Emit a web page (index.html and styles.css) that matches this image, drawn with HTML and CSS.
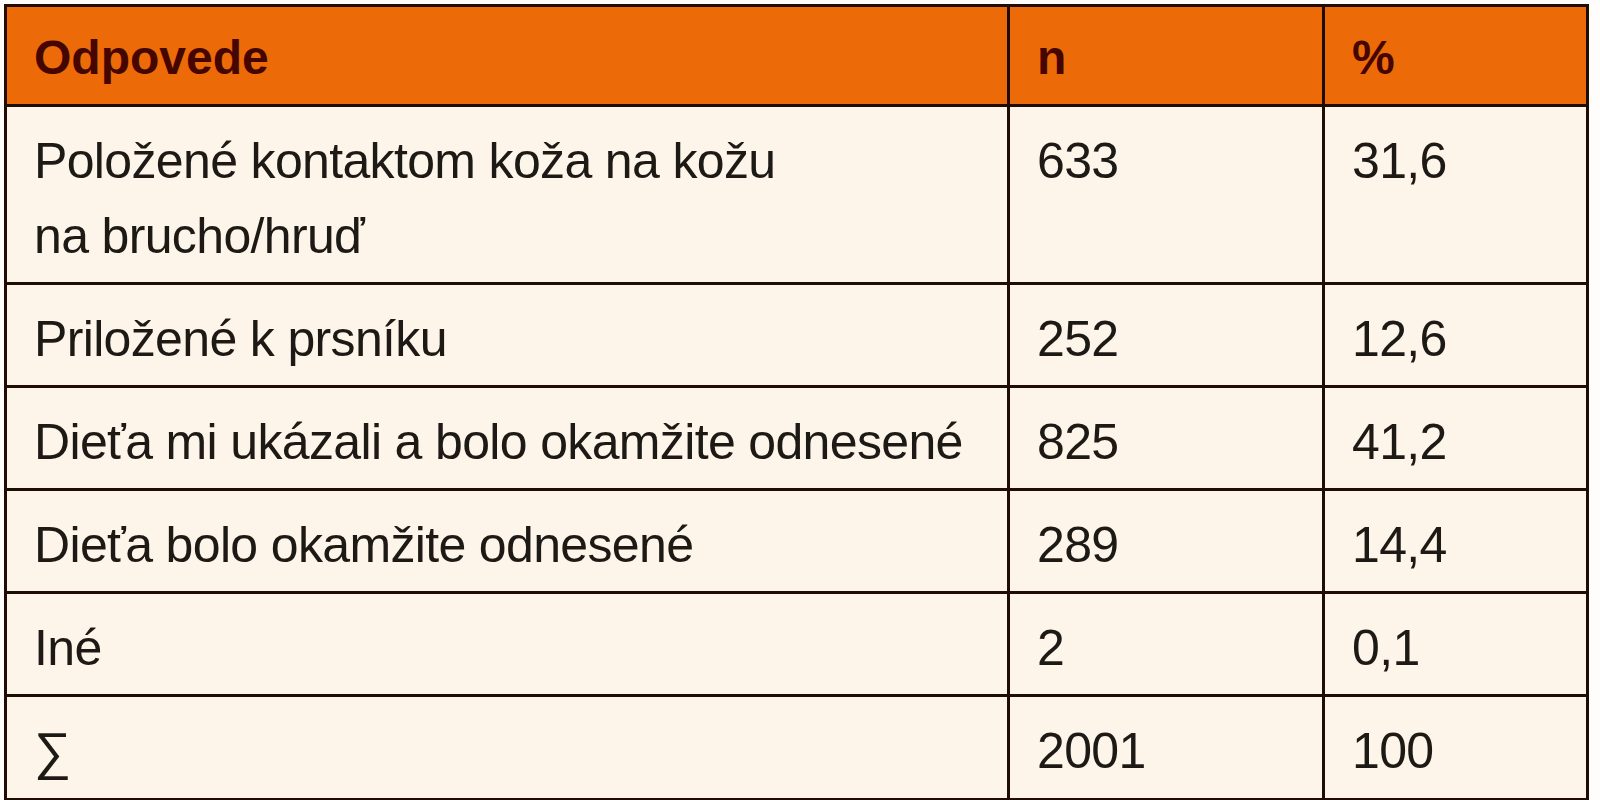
FILE: index.html
```html
<!DOCTYPE html>
<html lang="sk">
<head>
<meta charset="utf-8">
<title>Odpovede</title>
<link rel="stylesheet" href="styles.css">
</head>
<body>
<table class="data">
  <colgroup>
    <col class="c1">
    <col class="c2">
    <col class="c3">
  </colgroup>
  <thead>
    <tr class="head">
      <th>Odpovede</th>
      <th>n</th>
      <th>%</th>
    </tr>
  </thead>
  <tbody>
    <tr>
      <td>Položené kontaktom koža na kožu<br>na brucho/hruď</td>
      <td>633</td>
      <td>31,6</td>
    </tr>
    <tr>
      <td>Priložené k prsníku</td>
      <td>252</td>
      <td>12,6</td>
    </tr>
    <tr>
      <td>Dieťa mi ukázali a bolo okamžite odnesené</td>
      <td>825</td>
      <td>41,2</td>
    </tr>
    <tr>
      <td>Dieťa bolo okamžite odnesené</td>
      <td>289</td>
      <td>14,4</td>
    </tr>
    <tr>
      <td>Iné</td>
      <td>2</td>
      <td>0,1</td>
    </tr>
    <tr>
      <td><span class="sigma">∑</span></td>
      <td>2001</td>
      <td>100</td>
    </tr>
  </tbody>
</table>
</body>
</html>
```

FILE: styles.css
```css
html, body {
  margin: 0;
  padding: 0;
  background: #fffdfb;
}

body {
  padding: 4px 0 0 4px;
  font-family: "Liberation Sans", Arial, sans-serif;
}

.data {
  border-collapse: separate;
  border-spacing: 0;
  table-layout: fixed;
  width: 1585px;
  border-top: 3px solid #1f0d04;
  border-left: 3px solid #1f0d04;
  background: #fdf4ea;
}

.c1 { width: 1003px; }
.c2 { width: 315px; }
.c3 { width: 264px; }

.data th,
.data td {
  box-sizing: border-box;
  border-right: 3px solid #1f0d04;
  border-bottom: 3px solid #1f0d04;
  text-align: left;
  vertical-align: top;
  padding: 17px 10px 8px 27px;
}

.data th {
  background: #ec6a08;
  color: #460600;
  font-weight: bold;
  font-size: 48px;
  line-height: 60px;
  padding-top: 21px;
  padding-bottom: 16px;
}

.data td {
  color: #1d1915;
  font-size: 50px;
  line-height: 75px;
  letter-spacing: -0.65px;
}

.sigma {
  font-size: 52px;
  letter-spacing: 0;
}
```
